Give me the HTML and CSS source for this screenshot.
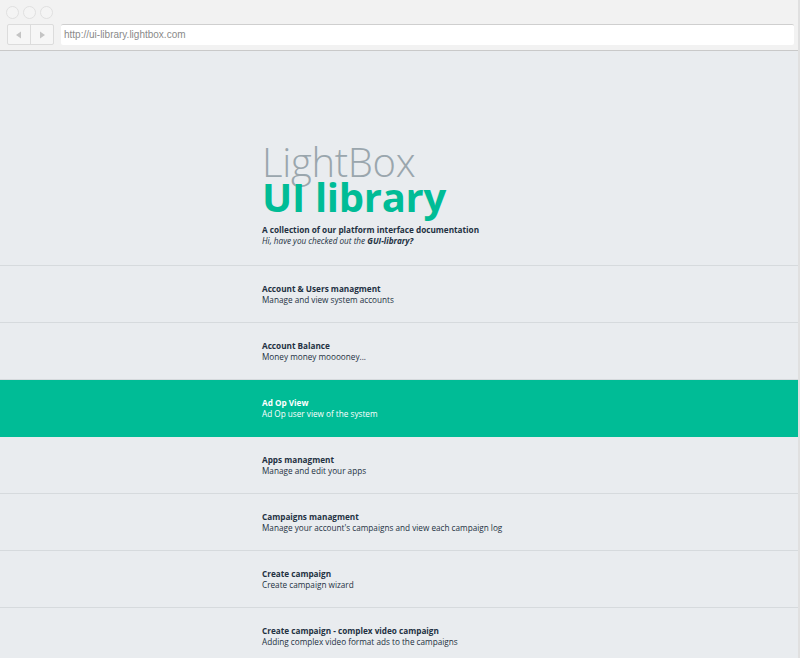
FILE: index.html
```html
<!DOCTYPE html>
<html>
<head>
<meta charset="utf-8">
<link rel="stylesheet" href="styles.css">
</head>
<body>
<div class="window">
  <div class="chrome">
    <div class="dots"><span class="dot"></span><span class="dot"></span><span class="dot"></span></div>
    <div class="toolbar">
      <div class="navs">
        <span class="nav"><svg width="8" height="8" viewBox="0 0 8 8"><path d="M6 0.5 L1 4 L6 7.5 Z" fill="#c4c4c4"/></svg></span>
        <span class="nav"><svg width="8" height="8" viewBox="0 0 8 8"><path d="M2 0.5 L7 4 L2 7.5 Z" fill="#c4c4c4"/></svg></span>
      </div>
      <div class="address">http://ui-library.lightbox.com</div>
    </div>
  </div>
  <div class="page">
    <header class="hero">
      <div class="brand">LightBox</div>
      <div class="product">UI library</div>
      <p class="lead">A collection of our platform interface documentation</p>
      <p class="note">Hi, have you checked out the <b>GUI-library?</b></p>
    </header>
    <ul class="list">
      <li class="item"><div class="item-inner"><div class="item-title">Account &amp; Users managment</div><div class="item-desc">Manage and view system accounts</div></div></li>
      <li class="item"><div class="item-inner"><div class="item-title">Account Balance</div><div class="item-desc">Money money mooooney...</div></div></li>
      <li class="item active"><div class="item-inner"><div class="item-title">Ad Op View</div><div class="item-desc">Ad Op user view of the system</div></div></li>
      <li class="item"><div class="item-inner"><div class="item-title">Apps managment</div><div class="item-desc">Manage and edit your apps</div></div></li>
      <li class="item"><div class="item-inner"><div class="item-title">Campaigns managment</div><div class="item-desc">Manage your account's campaigns and view each campaign log</div></div></li>
      <li class="item"><div class="item-inner"><div class="item-title">Create campaign</div><div class="item-desc">Create campaign wizard</div></div></li>
      <li class="item"><div class="item-inner"><div class="item-title">Create campaign - complex video campaign</div><div class="item-desc">Adding complex video format ads to the campaigns</div></div></li>
    </ul>
  </div>
</div>
</body>
</html>
```
FILE: styles.css
```css
html, body {
  margin: 0;
  padding: 0;
  height: 100%;
  overflow: hidden;
}
body {
  background: #e9ecef;
  font-family: "Open Sans", "Liberation Sans", sans-serif;
}
.window {
  height: 100%;
  border-right: 2px solid #e0e0e0;
  box-sizing: border-box;
}
.chrome {
  height: 50px;
  background: #f2f2f2;
  border-bottom: 1px solid #c9c9c9;
  box-sizing: content-box;
  display: flex;
  flex-direction: column;
}
.dots {
  display: flex;
  gap: 4px;
  padding: 6px 0 0 6px;
  height: 14px;
}
.dot {
  width: 13px;
  height: 13px;
  border-radius: 50%;
  border: 1px solid #e0e0e0;
  background: #f4f4f4;
  box-sizing: border-box;
}
.toolbar {
  display: flex;
  align-items: center;
  gap: 7px;
  padding: 4px 4px 0 7px;
}
.navs {
  display: flex;
  border: 1px solid #dcdcdc;
  border-radius: 2px;
  background: #f6f6f6;
}
.nav {
  width: 22px;
  height: 19px;
  display: flex;
  align-items: center;
  justify-content: center;
}
.nav + .nav {
  border-left: 1px solid #dcdcdc;
}
.address {
  flex: 1;
  height: 21px;
  background: #fff;
  border-top: 1px solid #cfcfcf;
  border-radius: 2px;
  box-sizing: border-box;
  font-family: "Liberation Sans", Arial, sans-serif;
  font-size: 10px;
  color: #8a8a8a;
  line-height: 20px;
  padding-left: 3px;
}
.hero {
  padding: 94px 0 19px 262px;
  border-bottom: 1px solid #d6dadd;
}
.brand {
  font-size: 40px;
  font-weight: 300;
  color: #9aa6ad;
  line-height: 34px;
  letter-spacing: -0.3px;
}
.product {
  font-size: 40px;
  font-weight: 700;
  color: #00bc96;
  line-height: 35px;
  letter-spacing: -0.3px;
}
.lead {
  margin: 10px 0 0;
  font-size: 8.2px;
  font-weight: 700;
  color: #233142;
  line-height: 11px;
}
.note {
  margin: 0;
  font-size: 8.2px;
  font-style: italic;
  color: #233142;
  line-height: 11px;
}
.list {
  list-style: none;
  margin: 0;
  padding: 0;
}
.item {
  height: 57px;
  border-bottom: 1px solid #d6dadd;
  box-sizing: border-box;
  display: flex;
  align-items: center;
  padding-left: 262px;
  color: #233142;
}
.item.active {
  background: #00bc96;
  color: #fff;
  border-bottom-color: #00bc96;
}
.item-title {
  font-size: 8.2px;
  font-weight: 700;
  line-height: 11px;
}
.item-desc {
  font-size: 8.2px;
  line-height: 11px;
}
```
